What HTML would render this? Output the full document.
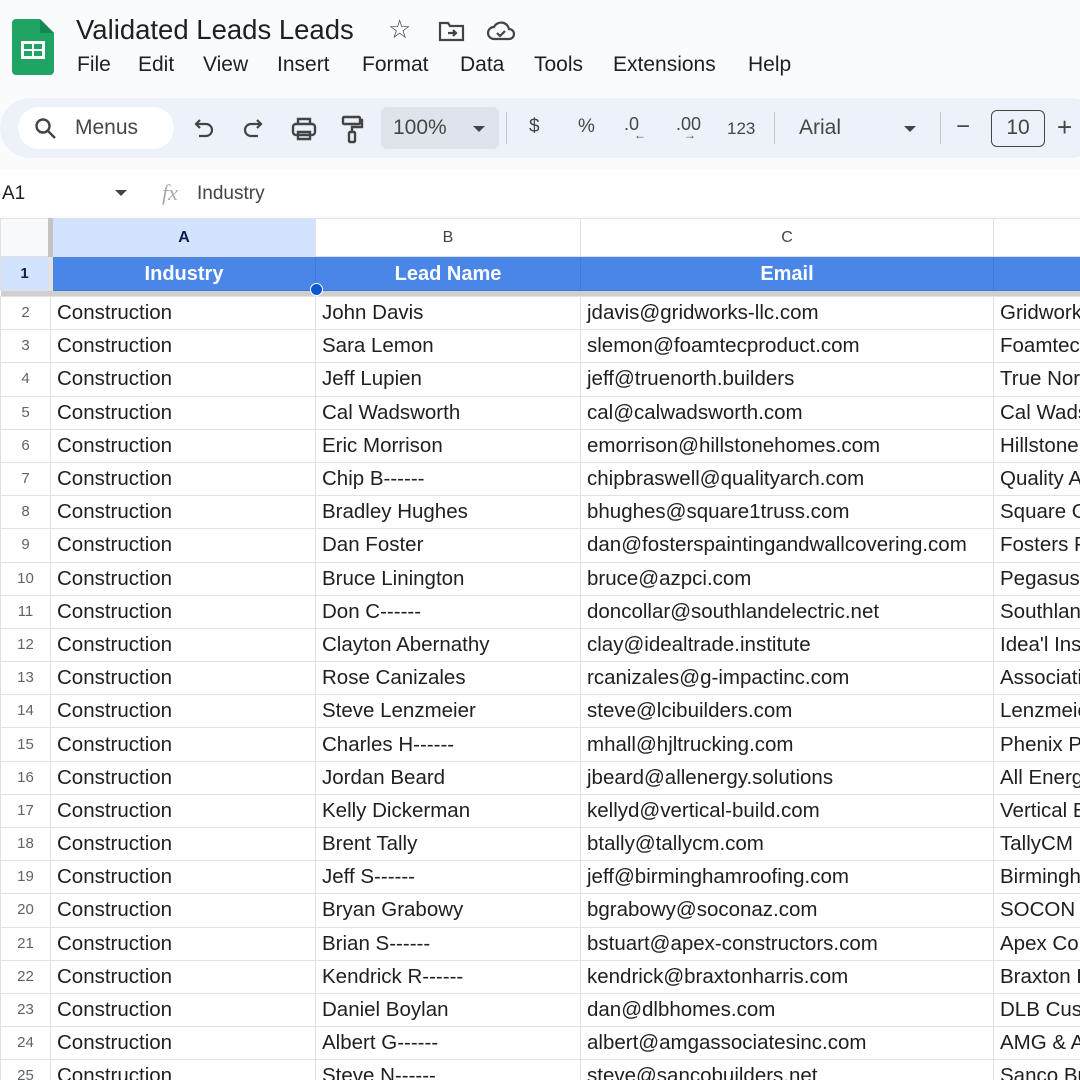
<!DOCTYPE html>
<html><head><meta charset="utf-8"><style>
*{margin:0;padding:0;box-sizing:border-box}
body{width:1080px;height:1080px;overflow:hidden;background:#f9fbfd;font-family:"Liberation Sans",Arial,sans-serif;position:relative;color:#1f1f1f}
.abs{position:absolute}
.title{left:76px;top:14px;font-size:27.5px;color:#1f1f1f}
.menu{top:53px;font-size:21px;color:#1f1f1f}
.tb{left:0;top:98px;width:1100px;height:60px;background:#edf2fa;border-radius:30px}
.search{left:18px;top:107px;width:156px;height:42px;background:#fff;border-radius:21px}
.t{font-size:21px;color:#444746}
.fbar{left:0;top:170px;width:1080px;height:46px;background:#fff}
.grid{left:0;top:218px;width:1080px;height:862px;background:#fff;overflow:hidden}
table{border-collapse:collapse;table-layout:fixed;position:absolute;left:0;top:0;width:1113px}
td{border:1px solid #e1e1e1;font-size:20.5px;white-space:nowrap;overflow:hidden;padding:0 0 0 6px;height:33.2px;color:#1f1f1f;line-height:20px}
td.rn{font-size:15px;color:#5f6368;text-align:center;padding:0;background:#fff}
tr.ch td{height:38px;text-align:center;font-size:16px;color:#444;padding:0;background:#fff}
tr.h td{height:34px;background:#4a86e8;color:#fff;font-weight:bold;text-align:center;padding:0;border-color:#3f7ad9}
tr.sep td{height:6px;background:#cfcfcf;border:none;padding:0}
</style></head><body>
<svg class="abs" style="left:12px;top:19px" width="42" height="56" viewBox="0 0 42 56"><path d="M4 0h24l14 14v38a4 4 0 0 1-4 4H4a4 4 0 0 1-4-4V4a4 4 0 0 1 4-4z" fill="#1fa463"/><path d="M28 0v14h14z" fill="#17874f"/><rect x="9" y="22" width="24" height="18" fill="#fff"/><rect x="12" y="25" width="8" height="5" fill="#1fa463"/><rect x="22" y="25" width="8" height="5" fill="#1fa463"/><rect x="12" y="32" width="8" height="5" fill="#1fa463"/><rect x="22" y="32" width="8" height="5" fill="#1fa463"/></svg>
<div class="abs title">Validated Leads Leads</div>
<div class="abs" style="left:388px;top:14px;font-size:26px;color:#444">☆</div>
<svg class="abs" style="left:438px;top:20px" width="28" height="22" viewBox="0 0 28 22" fill="none" stroke="#444" stroke-width="2.2"><path d="M2 3h8l2 3h13v14H2z"/><path d="M10 13h8M15 10l3 3-3 3"/></svg>
<svg class="abs" style="left:486px;top:20px" width="30" height="22" viewBox="0 0 30 22" fill="none" stroke="#444" stroke-width="2.2"><path d="M8 19a6 6 0 0 1 0-12 8 8 0 0 1 15 2 5 5 0 0 1 0 10z"/><path d="M11 13l3 3 5-5"/></svg>
<div class="abs menu" style="left:77px">File</div>
<div class="abs menu" style="left:138px">Edit</div>
<div class="abs menu" style="left:203px">View</div>
<div class="abs menu" style="left:277px">Insert</div>
<div class="abs menu" style="left:362px">Format</div>
<div class="abs menu" style="left:460px">Data</div>
<div class="abs menu" style="left:534px">Tools</div>
<div class="abs menu" style="left:613px">Extensions</div>
<div class="abs menu" style="left:748px">Help</div>
<div class="abs tb"></div>
<div class="abs search"></div>
<svg class="abs" style="left:34px;top:117px" width="24" height="24" viewBox="0 0 24 24" fill="none" stroke="#444" stroke-width="2.4"><circle cx="9" cy="9" r="6.5"/><path d="M14 14l7 7"/></svg>
<div class="abs t" style="left:75px;top:116px">Menus</div>
<svg class="abs" style="left:190px;top:116px" width="26" height="26" viewBox="0 0 26 26" fill="none" stroke="#444" stroke-width="2.2"><path d="M6 8h10a6 6 0 0 1 0 12H9"/><path d="M10 4L6 8l4 4"/></svg>
<svg class="abs" style="left:241px;top:116px" width="26" height="26" viewBox="0 0 26 26" fill="none" stroke="#444" stroke-width="2.2"><path d="M20 8H10a6 6 0 0 0 0 12h7"/><path d="M16 4l4 4-4 4"/></svg>
<svg class="abs" style="left:290px;top:116px" width="28" height="26" viewBox="0 0 28 26" fill="none" stroke="#444" stroke-width="2.4"><rect x="3" y="8" width="22" height="11" rx="3"/><path d="M8 8V3h12v5M8 16h12v7H8z"/></svg>
<svg class="abs" style="left:340px;top:114px" width="24" height="32" viewBox="0 0 24 32" fill="none" stroke="#444" stroke-width="2.4"><rect x="3" y="3" width="17" height="7" rx="1"/><path d="M20 6h2v7H12v5"/><rect x="9" y="18" width="6" height="10" rx="1"/></svg>
<div class="abs" style="left:381px;top:107px;width:118px;height:42px;background:#dfe4ec;border-radius:6px"></div>
<div class="abs t" style="left:393px;top:116px">100%</div>
<div class="abs" style="left:473px;top:126px;border:6px solid transparent;border-top:6px solid #444"></div>
<div class="abs" style="left:506px;top:112px;width:1px;height:32px;background:#c7c7c7"></div>
<div class="abs t" style="left:529px;top:116px;font-size:19px">$</div>
<div class="abs t" style="left:578px;top:116px;font-size:19px">%</div>
<div class="abs t" style="left:624px;top:114px;font-size:18px">.0</div>
<div class="abs t" style="left:634px;top:128px;font-size:12px">←</div>
<div class="abs t" style="left:676px;top:114px;font-size:18px">.00</div>
<div class="abs t" style="left:684px;top:128px;font-size:12px">→</div>
<div class="abs t" style="left:727px;top:119px;font-size:17px">123</div>
<div class="abs" style="left:774px;top:112px;width:1px;height:32px;background:#c7c7c7"></div>
<div class="abs t" style="left:799px;top:116px">Arial</div>
<div class="abs" style="left:904px;top:126px;border:6px solid transparent;border-top:6px solid #444"></div>
<div class="abs" style="left:940px;top:112px;width:1px;height:32px;background:#c7c7c7"></div>
<div class="abs t" style="left:956px;top:113px;font-size:24px">−</div>
<div class="abs" style="left:991px;top:110px;width:54px;height:37px;border:1.5px solid #444;border-radius:6px;font-size:21px;color:#444;text-align:center;line-height:34px">10</div>
<div class="abs t" style="left:1057px;top:112px;font-size:26px">+</div>
<div class="abs fbar"></div>
<div class="abs" style="left:2px;top:183px;font-size:19px;color:#1f1f1f">A1</div>
<div class="abs" style="left:115px;top:190px;border:6px solid transparent;border-top:6px solid #444"></div>
<div class="abs" style="left:162px;top:180px;font-size:22px;color:#aaa;font-style:italic;font-family:'Liberation Serif',serif">fx</div>
<div class="abs" style="left:197px;top:183px;font-size:19px;color:#444">Industry</div>
<div class="abs grid">
<table>
<colgroup><col style="width:50px"><col style="width:265px"><col style="width:265px"><col style="width:413px"><col style="width:120px"></colgroup>
<tr class="ch"><td style="border-right:5px solid #c4c4c4;background:#f8f9fa"></td><td style="background:#d3e3fd;font-weight:bold;color:#0b1f4d">A</td><td>B</td><td>C</td><td></td></tr>
<tr class="h"><td class="rn" style="background:#d3e3fd;color:#0b1f4d;font-weight:bold;border-right:5px solid #c4c4c4;border-color:#e1e1e1">1</td><td style="font-size:20px">Industry</td><td style="font-size:20px">Lead Name</td><td style="font-size:20px">Email</td><td></td></tr>
<tr class="sep"><td colspan="5"></td></tr>
<tr><td class="rn">2</td><td>Construction</td><td>John Davis</td><td>jdavis@gridworks-llc.com</td><td>Gridworks</td></tr>
<tr><td class="rn">3</td><td>Construction</td><td>Sara Lemon</td><td>slemon@foamtecproduct.com</td><td>Foamtec</td></tr>
<tr><td class="rn">4</td><td>Construction</td><td>Jeff Lupien</td><td>jeff@truenorth.builders</td><td>True North</td></tr>
<tr><td class="rn">5</td><td>Construction</td><td>Cal Wadsworth</td><td>cal@calwadsworth.com</td><td>Cal Wadsworth</td></tr>
<tr><td class="rn">6</td><td>Construction</td><td>Eric Morrison</td><td>emorrison@hillstonehomes.com</td><td>Hillstone</td></tr>
<tr><td class="rn">7</td><td>Construction</td><td>Chip B------</td><td>chipbraswell@qualityarch.com</td><td>Quality Arch</td></tr>
<tr><td class="rn">8</td><td>Construction</td><td>Bradley Hughes</td><td>bhughes@square1truss.com</td><td>Square One</td></tr>
<tr><td class="rn">9</td><td>Construction</td><td>Dan Foster</td><td>dan@fosterspaintingandwallcovering.com</td><td>Fosters Painting</td></tr>
<tr><td class="rn">10</td><td>Construction</td><td>Bruce Linington</td><td>bruce@azpci.com</td><td>Pegasus</td></tr>
<tr><td class="rn">11</td><td>Construction</td><td>Don C------</td><td>doncollar@southlandelectric.net</td><td>Southland</td></tr>
<tr><td class="rn">12</td><td>Construction</td><td>Clayton Abernathy</td><td>clay@idealtrade.institute</td><td>Idea'l Institute</td></tr>
<tr><td class="rn">13</td><td>Construction</td><td>Rose Canizales</td><td>rcanizales@g-impactinc.com</td><td>Association</td></tr>
<tr><td class="rn">14</td><td>Construction</td><td>Steve Lenzmeier</td><td>steve@lcibuilders.com</td><td>Lenzmeier</td></tr>
<tr><td class="rn">15</td><td>Construction</td><td>Charles H------</td><td>mhall@hjltrucking.com</td><td>Phenix P</td></tr>
<tr><td class="rn">16</td><td>Construction</td><td>Jordan Beard</td><td>jbeard@allenergy.solutions</td><td>All Energy</td></tr>
<tr><td class="rn">17</td><td>Construction</td><td>Kelly Dickerman</td><td>kellyd@vertical-build.com</td><td>Vertical Build</td></tr>
<tr><td class="rn">18</td><td>Construction</td><td>Brent Tally</td><td>btally@tallycm.com</td><td>TallyCM</td></tr>
<tr><td class="rn">19</td><td>Construction</td><td>Jeff S------</td><td>jeff@birminghamroofing.com</td><td>Birmingham</td></tr>
<tr><td class="rn">20</td><td>Construction</td><td>Bryan Grabowy</td><td>bgrabowy@soconaz.com</td><td>SOCON</td></tr>
<tr><td class="rn">21</td><td>Construction</td><td>Brian S------</td><td>bstuart@apex-constructors.com</td><td>Apex Constructors</td></tr>
<tr><td class="rn">22</td><td>Construction</td><td>Kendrick R------</td><td>kendrick@braxtonharris.com</td><td>Braxton Harris</td></tr>
<tr><td class="rn">23</td><td>Construction</td><td>Daniel Boylan</td><td>dan@dlbhomes.com</td><td>DLB Custom</td></tr>
<tr><td class="rn">24</td><td>Construction</td><td>Albert G------</td><td>albert@amgassociatesinc.com</td><td>AMG &amp; Associates</td></tr>
<tr><td class="rn">25</td><td>Construction</td><td>Steve N------</td><td>steve@sancobuilders.net</td><td>Sanco Builders</td></tr>
</table>
<div class="abs" style="left:310px;top:65px;width:13px;height:13px;border-radius:50%;background:#0b57d0;border:1.5px solid #fff"></div>
</div>
</body></html>
